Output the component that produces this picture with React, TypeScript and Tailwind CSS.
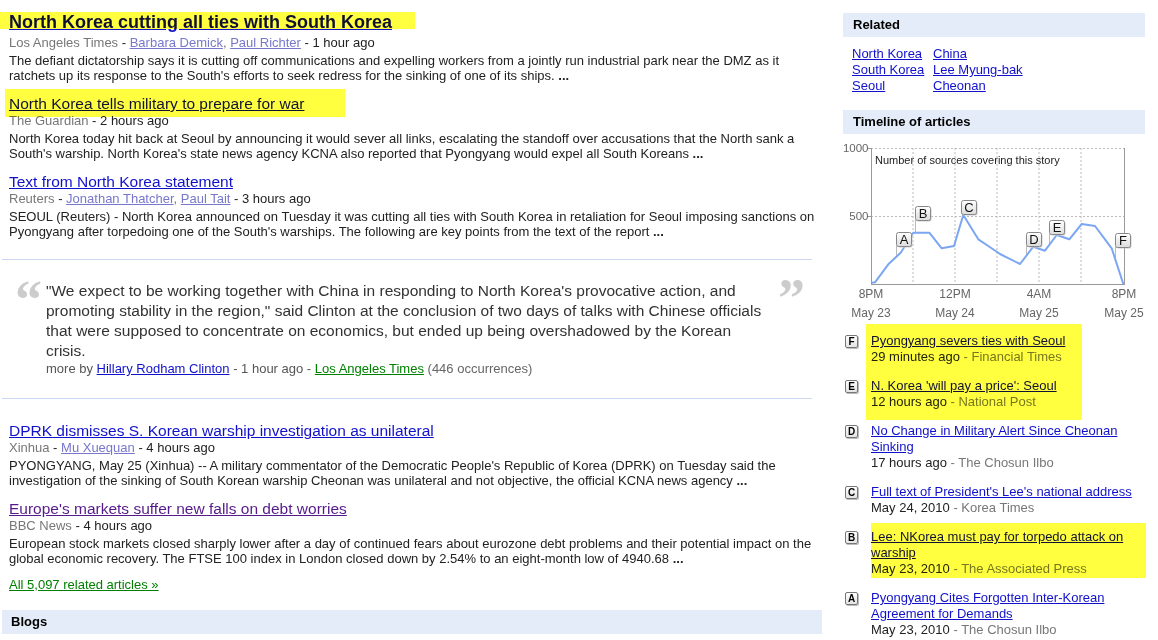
import React from 'react';

type Article = {
    title: string;
    visited?: boolean;
    bold?: boolean;
    highlight?: string;
    source: string;
    authors: string[];
    time: string;
    snippet: string;
};

const TOP_ARTICLES: Article[] = [
    {
        title: "North Korea cutting all ties with South Korea",
        bold: true,
        highlight: "left-[-9px] top-[1px] w-[415px] h-[17px]",
        source: "Los Angeles Times",
        authors: ["Barbara Demick", "Paul Richter"],
        time: "1 hour ago",
        snippet: "The defiant dictatorship says it is cutting off communications and expelling workers from a jointly run industrial park near the DMZ as it ratchets up its response to the South's efforts to seek redress for the sinking of one of its ships."
    },
    {
        title: "North Korea tells military to prepare for war",
        highlight: "left-[-4px] top-[-5px] w-[340px] h-[28px]",
        source: "The Guardian",
        authors: [],
        time: "2 hours ago",
        snippet: "North Korea today hit back at Seoul by announcing it would sever all links, escalating the standoff over accusations that the North sank a South's warship. North Korea's state news agency KCNA also reported that Pyongyang would expel all South Koreans"
    },
    {
        title: "Text from North Korea statement",
        source: "Reuters",
        authors: ["Jonathan Thatcher", "Paul Tait"],
        time: "3 hours ago",
        snippet: "SEOUL (Reuters) - North Korea announced on Tuesday it was cutting all ties with South Korea in retaliation for Seoul imposing sanctions on Pyongyang after torpedoing one of the South's warships. The following are key points from the text of the report"
    }
];

const MORE_ARTICLES: Article[] = [
    {
        title: "DPRK dismisses S. Korean warship investigation as unilateral",
        source: "Xinhua",
        authors: ["Mu Xuequan"],
        time: "4 hours ago",
        snippet: "PYONGYANG, May 25 (Xinhua) -- A military commentator of the Democratic People's Republic of Korea (DPRK) on Tuesday said the investigation of the sinking of South Korean warship Cheonan was unilateral and not objective, the official KCNA news agency"
    },
    {
        title: "Europe's markets suffer new falls on debt worries",
        visited: true,
        source: "BBC News",
        authors: [],
        time: "4 hours ago",
        snippet: "European stock markets closed sharply lower after a day of continued fears about eurozone debt problems and their potential impact on the global economic recovery. The FTSE 100 index in London closed down by 2.54% to an eight-month low of 4940.68"
    }
];

const RELATED = [["North Korea", "China"], ["South Korea", "Lee Myung-bak"], ["Seoul", "Cheonan"]];

const TIMELINE = [
    { letter: "F", title: "Pyongyang severs ties with Seoul", when: "29 minutes ago", source: "Financial Times" },
    { letter: "E", title: "N. Korea 'will pay a price': Seoul", when: "12 hours ago", source: "National Post" },
    { letter: "D", title: "No Change in Military Alert Since Cheonan Sinking", when: "17 hours ago", source: "The Chosun Ilbo" },
    { letter: "C", title: "Full text of President's Lee's national address", when: "May 24, 2010", source: "Korea Times" },
    { letter: "B", title: "Lee: NKorea must pay for torpedo attack on warship", when: "May 23, 2010", source: "The Associated Press" },
    { letter: "A", title: "Pyongyang Cites Forgotten Inter-Korean Agreement for Demands", when: "May 23, 2010", source: "The Chosun Ilbo" }
];

const SERIES = [
    [28.7, 142.7], [32, 142.3], [45.3, 124.3], [57.7, 112.7], [70.3, 92.7], [86.3, 92.7], [98.7, 108.3],
    [111, 106], [120.3, 75], [135.3, 99.3], [145.3, 106], [157, 114], [177, 124], [190.3, 106.7],
    [202, 110.7], [213.7, 95], [226.3, 99.3], [238.7, 84], [252, 86], [268.7, 108.3], [280.3, 144]
];

const MARKERS = [
    { l: "A", x: 53, y: 92, lead: 116 },
    { l: "B", x: 72, y: 66, lead: 93 },
    { l: "C", x: 118, y: 60, lead: 73 },
    { l: "D", x: 183, y: 92, lead: 116 },
    { l: "E", x: 206, y: 80, lead: 104 },
    { l: "F", x: 272, y: 93, lead: 120 }
];

const Highlight: React.FC<{ className: string }> = ({ className }) => (
    <span className={`absolute bg-[#ffff40] mix-blend-multiply pointer-events-none ${className}`} />
);

const ArticleItem: React.FC<{ a: Article }> = ({ a }) => (
    <div className="mb-[11px]">
        <div className={`relative ${a.bold ? 'text-[18px] leading-[22px] font-bold mb-[2px]' : 'text-[15.5px] leading-[19px]'}`}>
            <a href="#" className={`underline ${a.visited ? 'text-[#551a8b]' : 'text-[#1111cc]'}`}>
                {a.title}
            </a>
            {a.highlight && <Highlight className={a.highlight} />}
        </div>
        <div className="text-[13px] leading-[16px] text-[#222]">
            <span className="text-[#777]">{a.source}</span>
            {a.authors.length > 0 && (
                <>
                    {" - "}
                    {a.authors.map((au, i) => (
                        <React.Fragment key={au}>
                            {i > 0 && <span className="text-[#777]">, </span>}
                            <a href="#" className="underline text-[#7777cc]">{au}</a>
                        </React.Fragment>
                    ))}
                </>
            )}
            {" - " + a.time}
        </div>
        <p className="mt-[2px] text-[13px] leading-[15px] text-[#222] w-[814px]">
            {a.snippet} <b>...</b>
        </p>
    </div>
);

const Chart: React.FC = () => (
    <svg width="302" height="184" viewBox="0 0 302 184" className="block mt-[6px]" fontFamily="'Liberation Sans', Arial, sans-serif">
        {/* grid */}
        {[70, 112, 154, 196, 238].map((x) => (
            <line key={x} x1={x} y1={8} x2={x} y2={144} stroke="#bbb" strokeDasharray="2,2" />
        ))}
        {[8, 76].map((y) => (
            <line key={y} x1={28} y1={y + 0.5} x2={281} y2={y + 0.5} stroke="#bbb" strokeDasharray="2,2" />
        ))}
        <line x1={28.5} y1={8} x2={28.5} y2={144} stroke="#999" />
        <line x1={281.5} y1={8} x2={281.5} y2={144} stroke="#999" />
        <line x1={28} y1={144.5} x2={282} y2={144.5} stroke="#999" />
        <line x1={24} y1={8.5} x2={28} y2={8.5} stroke="#999" />
        <line x1={24} y1={76.5} x2={28} y2={76.5} stroke="#999" />
        <text x={25.5} y={12} fontSize="11.5" fill="#666" textAnchor="end">1000</text>
        <text x={25.5} y={80} fontSize="11.5" fill="#666" textAnchor="end">500</text>
        <text x={32} y={24} fontSize="11" fill="#222">Number of sources covering this story</text>

        {/* leader lines */}
        {MARKERS.map((m) => (
            <line key={m.l} x1={m.x + 0.5} y1={m.y + 14} x2={m.x + 0.5} y2={m.lead} stroke="#bbb" />
        ))}

        <polyline
            points={SERIES.map((p) => p.join(",")).join(" ")}
            fill="none"
            stroke="#7ba6f2"
            strokeWidth="2"
            strokeLinejoin="round"
        />

        <defs>
            <linearGradient id="mk" x1="0" y1="0" x2="0" y2="1">
                <stop offset="0" stopColor="#ffffff" />
                <stop offset="1" stopColor="#dcdcdc" />
            </linearGradient>
        </defs>
        {MARKERS.map((m) => (
            <g key={m.l}>
                <rect x={m.x + 1.5} y={m.y + 1.5} width={15} height={14} rx={2} fill="#ccc" />
                <rect x={m.x + 0.5} y={m.y + 0.5} width={15} height={14} rx={2} fill="url(#mk)" stroke="#888" />
                <text x={m.x + 8} y={m.y + 12} fontSize="13" fill="#111" textAnchor="middle">{m.l}</text>
            </g>
        ))}

        {[
            { x: 28, t: "8PM", d: "May 23" },
            { x: 112, t: "12PM", d: "May 24" },
            { x: 196, t: "4AM", d: "May 25" },
            { x: 281, t: "8PM", d: "May 25" }
        ].map((l) => (
            <g key={l.x}>
                <text x={l.x} y={158} fontSize="12" fill="#666" textAnchor="middle">{l.t}</text>
                <text x={l.x} y={177} fontSize="12" fill="#666" textAnchor="middle">{l.d}</text>
            </g>
        ))}
    </svg>
);

const TimelineItem: React.FC<{ t: typeof TIMELINE[number] }> = ({ t }) => (
    <div className="flex mb-[13px]">
        <div className="w-[28px] pt-[2px] pl-[2px] shrink-0">
            <div className="w-[13px] h-[13px] border border-[#777] rounded-[2px] bg-gradient-to-b from-white to-[#e4e4e4] shadow-[1px_1px_0_#bbb] flex items-center justify-center text-[10px] font-bold leading-none text-black">
                {t.letter}
            </div>
        </div>
        <div className="w-[272px] text-[13px] leading-[16px]">
            <a href="#" className="underline text-[#1111cc]">{t.title}</a>
            <div className="text-[#222]">
                {t.when} <span className="text-[#777]">- {t.source}</span>
            </div>
        </div>
    </div>
);

const App: React.FC = () => {
    return (
        <div className="bg-white w-[1158px] h-[640px] overflow-hidden font-['Liberation_Sans',Arial,sans-serif] flex">
            {/* Main column */}
            <div className="w-[820px] ml-[2px] shrink-0">
                <div className="pl-[7px] pt-[11px]">
                    {TOP_ARTICLES.map((a) => <ArticleItem key={a.title} a={a} />)}
                </div>

                <div className="w-[810px] h-px bg-[#c9d7f1] mt-[20px]" />

                {/* Quote */}
                <div className="flex pt-[21px] pb-[21px]">
                    <div className="w-[44px] shrink-0 pl-[13px] -mt-[8px] text-[54px] leading-[54px] font-bold text-[#ccc] font-['Liberation_Serif',Georgia,serif] h-[30px] overflow-visible">
                        &ldquo;
                    </div>
                    <div className="w-[728px] shrink-0">
                        <p className="text-[15.5px] leading-[20px] text-[#333]">
                            "We expect to be working together with China in responding to North Korea's provocative action, and promoting stability in the region," said Clinton at the conclusion of two days of talks with Chinese officials that were supposed to concentrate on economics, but ended up being overshadowed by the Korean crisis.
                        </p>
                        <div className="text-[13px] leading-[16px] text-[#555]">
                            more by <a href="#" className="underline text-[#1111cc]">Hillary Rodham Clinton</a> - 1 hour ago - <a href="#" className="underline text-[#008000]">Los Angeles Times</a> <span className="text-[#666]">(446 occurrences)</span>
                        </div>
                    </div>
                    <div className="pl-[4px] -mt-[10px] text-[54px] leading-[54px] font-bold text-[#ccc] font-['Liberation_Serif',Georgia,serif] h-[30px]">
                        &rdquo;
                    </div>
                </div>

                <div className="w-[810px] h-px bg-[#c9d7f1]" />

                <div className="pl-[7px] pt-[22px]">
                    {MORE_ARTICLES.map((a) => <ArticleItem key={a.title} a={a} />)}
                    <div className="text-[13px] leading-[16px]">
                        <a href="#" className="underline text-[#008000]">All 5,097 related articles »</a>
                    </div>
                </div>

                <div className="mt-[17px] h-[24px] bg-[#e5ecf9] pl-[9px] flex items-center text-[13px] font-bold text-black">
                    Blogs
                </div>
            </div>

            {/* Sidebar */}
            <div className="w-[302px] ml-[21px] pt-[13px] shrink-0">
                <div className="h-[24px] bg-[#e5ecf9] pl-[10px] flex items-center text-[13px] font-bold text-black">Related</div>
                <div className="grid grid-cols-[81px_auto] pl-[9px] pt-[9px] text-[13px] leading-[16px]">
                    {RELATED.map((row) => (
                        <React.Fragment key={row[0]}>
                            <a href="#" className="underline text-[#1111cc]">{row[0]}</a>
                            <a href="#" className="underline text-[#1111cc]">{row[1]}</a>
                        </React.Fragment>
                    ))}
                </div>

                <div className="mt-[16px] h-[24px] bg-[#e5ecf9] pl-[10px] flex items-center text-[13px] font-bold text-black">Timeline of articles</div>

                <Chart />

                <div className="mt-[9px]">
                    <div className="relative">
                        <Highlight className="left-[23px] top-[-9px] w-[216px] h-[96px]" />
                        {TIMELINE.slice(0, 2).map((t) => <TimelineItem key={t.letter} t={t} />)}
                    </div>
                    {TIMELINE.slice(2).map((t) => (
                        <div key={t.letter} className="relative">
                            {t.letter === "B" && <Highlight className="left-[28px] top-[-6px] w-[275px] h-[55px]" />}
                            <TimelineItem t={t} />
                        </div>
                    ))}
                </div>
            </div>
        </div>
    );
};

export default App;
